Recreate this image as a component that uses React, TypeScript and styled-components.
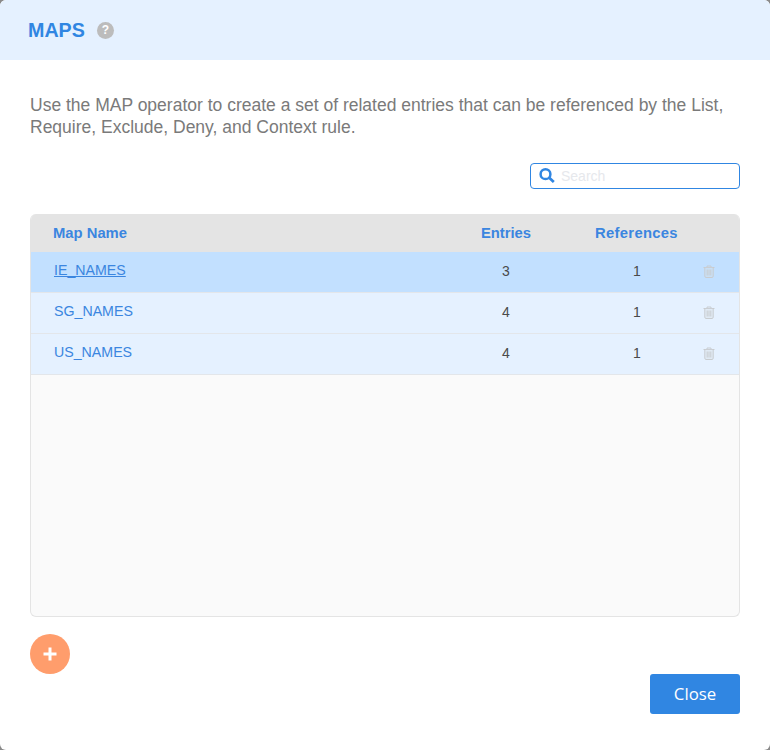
import React from "react";
import styled, { createGlobalStyle } from "styled-components";

const Global = createGlobalStyle`
  html, body { margin: 0; padding: 0; background: #8a8a8a; }
  body { font-family: "Liberation Sans", Arial, sans-serif; }
`;

const Modal = styled.div`
  width: 770px;
  height: 750px;
  background: #fff;
  border-radius: 6px;
  overflow: hidden;
  display: flex;
  flex-direction: column;
`;

const Header = styled.header`
  height: 60px;
  flex: none;
  background: #e5f1ff;
  display: flex;
  align-items: center;
  gap: 12px;
  padding-left: 28px;
  box-sizing: border-box;
`;

const Title = styled.h1`
  margin: 0;
  font-size: 19.7px;
  line-height: 24px;
  font-weight: 700;
  color: #3086e2;
`;

const Help = styled.span`
  width: 17px;
  height: 17px;
  border-radius: 50%;
  background: #bcbcbc;
  color: #fff;
  font-size: 12px;
  font-weight: 700;
  line-height: 17px;
  text-align: center;
`;

const Body = styled.div`
  flex: 1;
  display: flex;
  flex-direction: column;
  padding: 34px 30px 0;
`;

const Intro = styled.p`
  margin: 0;
  font-size: 17.5px;
  line-height: 22px;
  color: #7a7a7a;
  white-space: nowrap;
`;

const SearchRow = styled.div`
  display: flex;
  justify-content: flex-end;
  margin-top: 25px;
`;

const SearchBox = styled.label`
  width: 210px;
  height: 26px;
  box-sizing: border-box;
  border: 1px solid #3086e2;
  border-radius: 4px;
  display: flex;
  align-items: center;
  gap: 6px;
  padding-left: 8px;
  svg { flex: none; margin-top: -2px; }
`;

const SearchInput = styled.input`
  border: 0;
  outline: 0;
  padding: 0;
  min-width: 0;
  flex: 1;
  font: 14px "Liberation Sans", Arial, sans-serif;
  background: transparent;
  &::placeholder { color: #e6e8ec; opacity: 1; }
`;

const Table = styled.div`
  margin-top: 25px;
  height: 403px;
  box-sizing: border-box;
  border: 1px solid #e4e4e4;
  border-top: 0;
  border-radius: 6px;
  background: #fafafa;
  overflow: hidden;
`;

const grid = `
  display: grid;
  grid-template-columns: 23px 402px 100px 162px 1fr;
  align-items: center;
`;

const HeadRow = styled.div`
  ${grid}
  height: 38px;
  background: #e4e4e4;
  font-size: 14.8px;
  font-weight: 700;
  color: #3b86e0;
`;

const Row = styled.div<{ $active?: boolean }>`
  ${grid}
  height: 41px;
  box-sizing: border-box;
  border-bottom: 1px solid #e3e6ea;
  background: ${(p) => (p.$active ? "#c2e0ff" : "#e5f1ff")};
  font-size: 14px;
  color: #4a4a4a;
`;

const NameCell = styled.div<{ $active?: boolean }>`
  grid-column: 2;
  margin-top: -4px;
  font-size: 14.2px;
  color: #3b86e0;
  text-decoration: ${(p) => (p.$active ? "underline" : "none")};
`;

const HeadName = styled.div`
  grid-column: 2;
  margin-left: -1px;
`;

const NumCell = styled.div`
  text-align: center;
  margin-top: -2px;
`;

const HeadCell = styled.div<{ $wide?: boolean }>`
  text-align: center;
  margin-right: ${(p) => (p.$wide ? "1px" : "0")};
  letter-spacing: ${(p) => (p.$wide ? "0.3px" : "0")};
`;

const TrashCell = styled.div`
  display: flex;
  margin-left: -15px;
  margin-top: -2px;
`;

const Footer = styled.div`
  display: flex;
  flex-direction: column;
  margin-top: 17px;
`;

const AddButton = styled.button`
  width: 40px;
  height: 40px;
  border: 0;
  padding: 0;
  border-radius: 50%;
  background: #ff9d6c;
  display: flex;
  align-items: center;
  justify-content: center;
`;

const CloseButton = styled.button`
  align-self: flex-end;
  width: 90px;
  height: 40px;
  border: 0;
  border-radius: 3px;
  padding: 0 0 2px;
  background: #3086e2;
  color: #fff;
  font: 16.8px "Open Sans", sans-serif;
`;

const Trash = () => (
  <svg width="12" height="13" viewBox="0 0 12 13" fill="none" stroke="#c8ccd0" strokeWidth="1">
    <path d="M0.5 2.5h11" />
    <path d="M4 2.5V1h4v1.5" />
    <path d="M1.8 2.5v8.7c0 .7.5 1.3 1.2 1.3h6c.7 0 1.2-.6 1.2-1.3V2.5" fill="#d8dcdf" fillOpacity=".35" />
    <path d="M4.2 4.5v6M6 4.5v6M7.8 4.5v6" />
  </svg>
);

const rows = [
  { name: "IE_NAMES", entries: 3, refs: 1, active: true },
  { name: "SG_NAMES", entries: 4, refs: 1 },
  { name: "US_NAMES", entries: 4, refs: 1 },
];

export default function App() {
  return (
    <Modal>
      <Global />
      <Header>
        <Title>MAPS</Title>
        <Help>?</Help>
      </Header>
      <Body>
        <Intro>
          Use the MAP operator to create a set of related entries that can be referenced by the List,
          <br />
          Require, Exclude, Deny, and Context rule.
        </Intro>
        <SearchRow>
          <SearchBox>
            <svg width="16" height="15" viewBox="0 0 16 15" fill="none" stroke="#3086e2">
              <circle cx="6.5" cy="6.2" r="4.9" strokeWidth="2.5" />
              <path d="M10.2 9.8 14.8 14" strokeWidth="2.8" />
            </svg>
            <SearchInput placeholder="Search" />
          </SearchBox>
        </SearchRow>
        <Table>
          <HeadRow>
            <HeadName>Map Name</HeadName>
            <HeadCell>Entries</HeadCell>
            <HeadCell $wide>References</HeadCell>
          </HeadRow>
          {rows.map((r) => (
            <Row key={r.name} $active={r.active}>
              <NameCell $active={r.active}>{r.name}</NameCell>
              <NumCell>{r.entries}</NumCell>
              <NumCell>{r.refs}</NumCell>
              <TrashCell>
                <Trash />
              </TrashCell>
            </Row>
          ))}
        </Table>
        <Footer>
          <AddButton aria-label="Add">
            <svg width="14" height="14" viewBox="0 0 14 14" fill="#fff">
              <path d="M5.5 0.5h3v5h5v3h-5v5h-3v-5h-5v-3h5z" />
            </svg>
          </AddButton>
          <CloseButton>Close</CloseButton>
        </Footer>
      </Body>
    </Modal>
  );
}
